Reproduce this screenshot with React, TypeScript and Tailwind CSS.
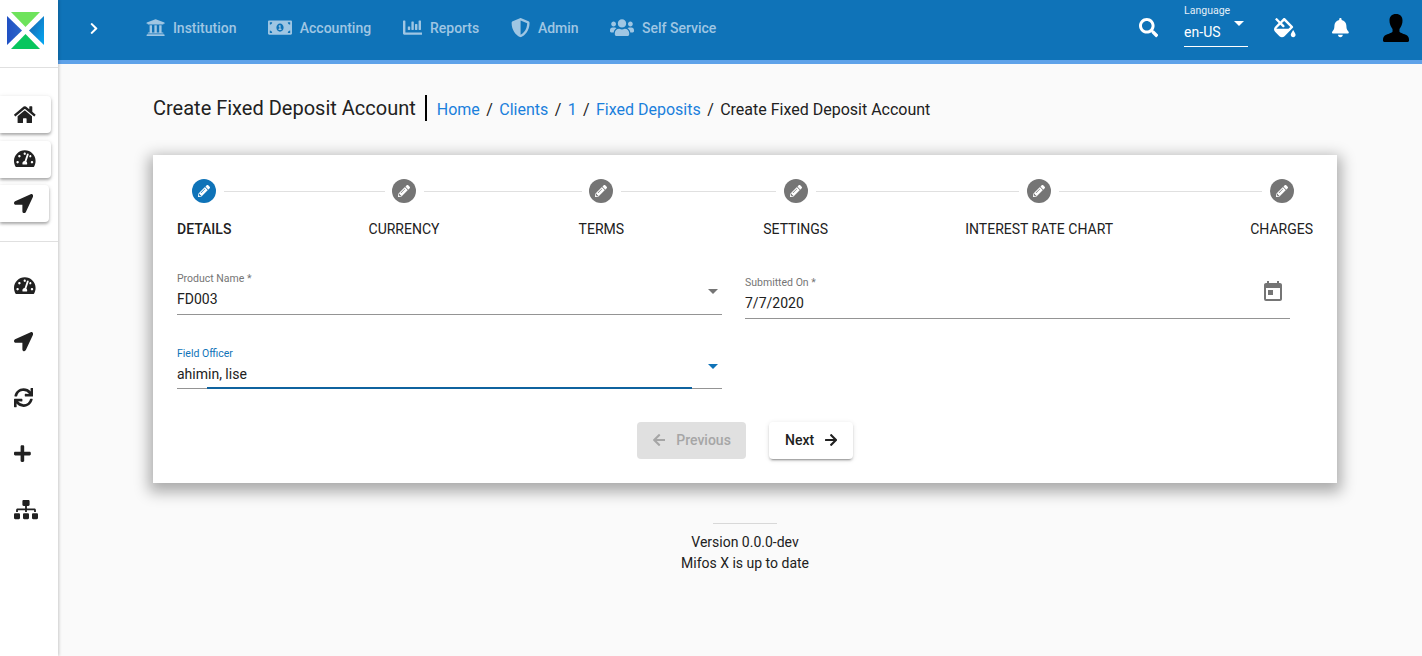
import React from "react";
import {
  FaArrowLeft,
  FaArrowRight,
  FaBell,
  FaChartBar,
  FaChevronRight,
  FaFillDrip,
  FaHome,
  FaLocationArrow,
  FaMoneyBillAlt,
  FaPencilAlt,
  FaPlus,
  FaSearch,
  FaShieldAlt,
  FaSitemap,
  FaSync,
  FaTachometerAlt,
  FaUniversity,
  FaUsers,
} from "react-icons/fa";
import { MdToday } from "react-icons/md";

const navItems = [
  { label: "Institution", icon: FaUniversity, iconCls: "h-[19.200px] w-[19.200px]", left: "ml-[46.700px]" },
  { label: "Accounting", icon: FaMoneyBillAlt, iconCls: "h-[19.200px] w-[24px]", left: "ml-[31.300px]" },
  { label: "Reports", icon: FaChartBar, iconCls: "h-[19.200px] w-[19.200px]", left: "ml-[31.600px]" },
  { label: "Admin", icon: FaShieldAlt, iconCls: "h-[19.200px] w-[19.200px]", left: "ml-[31.500px]" },
  { label: "Self Service", icon: FaUsers, iconCls: "h-[19.200px] w-[24px]", left: "ml-[31.300px]" },
];

const steps = [
  { label: "DETAILS", active: true, grow: "flex-[137]", line: "ml-[-7px] mr-[-16px]" },
  { label: "CURRENCY", grow: "flex-[139]", line: "ml-[-15px] mr-[-3px]" },
  { label: "TERMS", grow: "flex-[139]", line: "ml-[-3px] mr-[-13px]" },
  { label: "SETTINGS", grow: "flex-[137]", line: "ml-[-12px] mr-[-54px]" },
  { label: "INTEREST RATE CHART", grow: "flex-[137]", line: "ml-[-54px] mr-[-12px]" },
  { label: "CHARGES" },
];

function Logo() {
  return (
    <svg viewBox="0 0 37 37" className="h-[37px] w-[37px]">
      <defs>
        <linearGradient id="logoRight" x1="0" y1="0" x2="1" y2="1">
          <stop offset="0" stopColor="#1a5fa8" />
          <stop offset="1" stopColor="#03a9f4" />
        </linearGradient>
        <linearGradient id="logoLeft" x1="0" y1="0" x2="1" y2="0">
          <stop offset="0" stopColor="#2050c4" />
          <stop offset="1" stopColor="#2a66c8" />
        </linearGradient>
      </defs>
      <polygon points="4,0 33,0 18.5,15" fill="#6ee35c" />
      <polygon points="0,4 0,33 15,18.5" fill="url(#logoLeft)" />
      <polygon points="37,4 37,33 22,18.5" fill="url(#logoRight)" />
      <polygon points="4,37 33,37 18.5,22" fill="#08c65e" />
    </svg>
  );
}

function UserSilhouette() {
  return (
    <svg viewBox="0 0 24 28" preserveAspectRatio="none" className="h-[28px] w-[26px]">
      <path
        d="M12 0c-3.900 0-6 2.600-6 6.400 0 1.500.2 2.900.6 4 .3 1 .5 1.700.9 2.400.4.9.9 1.600 1.300 2.100v2.600c0 1-3.200 2.200-5.800 3.200C1 21.700 0 23 0 25.800V27c0 .5 1 1 2 1h20c1 0 2-.5 2-1v-1.200c0-2.800-1-4.100-3-5.100-2.600-1-5.800-2.200-5.800-3.200v-2.600c.4-.5.9-1.200 1.300-2.100.4-.7.6-1.400.9-2.400.4-1.100.6-2.500.6-4C18 2.600 15.900 0 12 0z"
        fill="#000"
      />
    </svg>
  );
}

function Sidebar() {
  const cardCls =
    "flex h-[37px] w-fit items-center rounded-r bg-white pl-[14px] pr-[15.400px] text-[#212121] shadow-[0_2px_3px_rgba(0,0,0,0.28),0_1px_5px_rgba(0,0,0,0.12)]";
  const iconRowCls = "flex h-[56px] items-center pl-[14px] text-[#212121]";
  return (
    <aside className="z-20 flex h-full w-[58px] shrink-0 flex-col bg-white shadow-[1px_0_3px_rgba(0,0,0,0.2)]">
      <div className="flex h-[68px] shrink-0 items-start border-b border-[#e0e0e0] pl-[7px] pt-[12px]">
        <Logo />
      </div>
      <div className="flex flex-col gap-[7.500px] pt-[28px]">
        <div className={cardCls}>
          <FaHome className="h-[19.200px] w-[21.600px]" />
        </div>
        <div className={cardCls}>
          <FaTachometerAlt className="h-[19.200px] w-[21.600px]" />
        </div>
        <div className={cardCls}>
          <FaLocationArrow className="h-[19.200px] w-[19.200px]" />
        </div>
      </div>
      <div className="mt-[19px] border-b border-[#e0e0e0]" />
      <div className="flex flex-col pt-[16px]">
        <div className={iconRowCls}>
          <FaTachometerAlt className="h-[19.200px] w-[21.600px]" />
        </div>
        <div className={iconRowCls}>
          <FaLocationArrow className="h-[19.200px] w-[19.200px]" />
        </div>
        <div className={iconRowCls}>
          <FaSync className="h-[19.200px] w-[19.200px]" />
        </div>
        <div className={iconRowCls}>
          <FaPlus className="h-[19.200px] w-[16.800px]" />
        </div>
        <div className={iconRowCls}>
          <FaSitemap className="h-[19.200px] w-[24px]" />
        </div>
      </div>
    </aside>
  );
}

function Header() {
  return (
    <header className="flex h-[64px] shrink-0 items-center border-b-[4px] border-[#5ea2e9] bg-[#0f73b8] pb-1 pl-[31px] pr-[13px] text-white">
      <FaChevronRight className="h-[13px] w-[10px]" />
      <nav className="flex items-center text-sm font-medium text-[#9fc6e3]">
        {navItems.map((item) => (
          <div key={item.label} className={`flex items-center gap-2 ${item.left}`}>
            <item.icon className={item.iconCls} />
            <span>{item.label}</span>
          </div>
        ))}
      </nav>
      <div className="ml-auto flex h-full items-center">
        <FaSearch className="h-[19.200px] w-[19.200px]" />
        <div className="ml-[26px] flex h-[47px] w-16 flex-col self-start border-b border-white">
          <span className="mt-1 text-[10.500px] leading-[14px] text-[#e3eef7]">Language</span>
          <div className="mt-[3px] flex items-start justify-between pr-[4px]">
            <span className="text-sm leading-[22px]">en-US</span>
            <span className="h-0 w-0 border-x-[5px] border-t-[5px] border-x-transparent border-t-white" />
          </div>
        </div>
        <FaFillDrip className="ml-[26px] h-[19.200px] w-[21.600px]" />
        <FaBell className="ml-[36.500px] h-[19.200px] w-[16.800px]" />
        <div className="ml-[34px]">
          <UserSilhouette />
        </div>
      </div>
    </header>
  );
}

function Stepper() {
  return (
    <div className="flex items-start px-6 pt-6">
      {steps.map((step) => (
        <React.Fragment key={step.label}>
          <div className="flex flex-col items-center">
            <div
              className={`relative z-10 flex h-6 w-6 items-center justify-center rounded-full text-white ${
                step.active ? "bg-[#0f73b8]" : "bg-[#757575]"
              }`}
            >
              <FaPencilAlt className="h-3 w-3" />
            </div>
            <span
              className={`mt-4 whitespace-nowrap text-sm leading-[20px] text-[#212121] ${
                step.active ? "font-medium" : ""
              }`}
            >
              {step.label}
            </span>
          </div>
          {step.line && (
            <div className={step.grow}>
              <div className={`mt-3 h-px bg-[#e0e0e0] ${step.line}`} />
            </div>
          )}
        </React.Fragment>
      ))}
    </div>
  );
}

function Caret({ blue }: { blue?: boolean }) {
  return (
    <span
      className={`mt-[-16px] h-0 w-0 border-x-[5px] border-t-[5px] border-x-transparent ${
        blue ? "border-t-[#0f73b8]" : "border-t-[#757575]"
      }`}
    />
  );
}

function DetailsForm() {
  return (
    <div className="mt-[33px] grid grid-cols-[545px_545px] items-start gap-x-[23px] px-6">
      <div className="border-b border-[#949494] pb-[5px]">
        <div className="text-[10.500px] leading-[14px] text-[#757575]">Product Name *</div>
        <div className="mt-[3px] flex items-center justify-between pr-[4px] text-sm leading-[20px] text-[#212121]">
          <span>FD003</span>
          <Caret />
        </div>
      </div>
      <div className="mt-1 flex items-start justify-between border-b border-[#949494] pb-[5px] pr-[5.500px]">
        <div>
          <div className="text-[10.500px] leading-[14px] text-[#757575]">Submitted On *</div>
          <div className="mt-[3px] text-sm leading-[20px] text-[#212121]">7/7/2020</div>
        </div>
        <MdToday className="mt-1 h-6 w-6 text-[#757575]" />
      </div>
      <div className="relative mt-[28px] border-b border-[#949494] pb-[4px]">
        <div className="text-[10.500px] leading-[14px] text-[#0f73b8]">Field Officer</div>
        <div className="mt-[3px] flex items-center justify-between pr-[4px] text-sm leading-[20px] text-[#212121]">
          <span>ahimin, lise</span>
          <Caret blue />
        </div>
        <div className="absolute bottom-[-1px] left-[30px] right-[30px] h-[2px] bg-[#0f639f]" />
      </div>
    </div>
  );
}

function StepButtons() {
  return (
    <div className="mt-[33px] flex justify-center gap-[23px] text-sm font-medium">
      <button className="flex h-[37px] w-[109px] items-center gap-[11px] rounded bg-[#e0e0e0] pb-[1px] pl-4 text-[#a6a6a6]">
        <FaArrowLeft className="h-[14px] w-[12.250px]" />
        Previous
      </button>
      <button className="flex h-[37px] w-[84px] items-center gap-[11px] rounded bg-white pb-[1px] pl-4 text-[#212121] shadow-[0_3px_1px_-2px_rgba(0,0,0,0.2),0_2px_2px_rgba(0,0,0,0.14),0_1px_5px_rgba(0,0,0,0.12)]">
        Next
        <FaArrowRight className="h-[14px] w-[12.250px]" />
      </button>
    </div>
  );
}

export default function App() {
  return (
    <div className="flex h-screen overflow-hidden bg-[#fafafa] font-['Roboto',sans-serif] text-sm">
      <Sidebar />
      <div className="flex min-w-0 flex-1 flex-col">
        <Header />
        <main className="ml-[95px] flex w-[1184px] flex-col pt-[31px]">
          <div className="flex items-start">
            <h1 className="text-xl leading-[26px] text-[#212121]">Create Fixed Deposit Account</h1>
            <span className="ml-[9px] h-[26px] w-[2px] bg-black" />
            <div className="ml-[10px] mt-[3px] flex items-center gap-[6.400px] text-base text-[#212121]">
              <a className="text-[#1a80dc]">Home</a>
              <span>/</span>
              <a className="text-[#1a80dc]">Clients</a>
              <span>/</span>
              <a className="text-[#1a80dc]">1</a>
              <span>/</span>
              <a className="text-[#1a80dc]">Fixed Deposits</a>
              <span>/</span>
              <span>Create Fixed Deposit Account</span>
            </div>
          </div>
          <section className="mt-[33px] h-[328px] bg-white shadow-[0_5px_14px_4px_rgba(0,0,0,0.32)]">
            <Stepper />
            <DetailsForm />
            <StepButtons />
          </section>
          <footer className="mt-[40px] flex flex-col items-center text-[#212121]">
            <div className="w-16 border-t border-[#d8d8d8]" />
            <div className="mt-[8px] leading-[21px]">Version 0.0.0-dev</div>
            <div className="leading-[21px]">Mifos X is up to date</div>
          </footer>
        </main>
      </div>
    </div>
  );
}
